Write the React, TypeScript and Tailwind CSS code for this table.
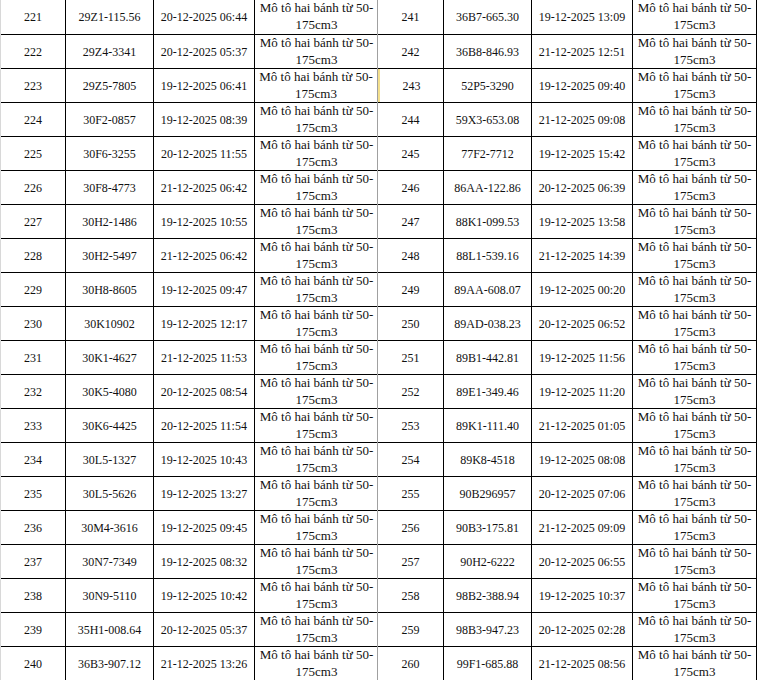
import React from "react";

const left: [string, string, string][] = [
  ["221", "29Z1-115.56", "20-12-2025 06:44"],
  ["222", "29Z4-3341", "20-12-2025 05:37"],
  ["223", "29Z5-7805", "19-12-2025 06:41"],
  ["224", "30F2-0857", "19-12-2025 08:39"],
  ["225", "30F6-3255", "20-12-2025 11:55"],
  ["226", "30F8-4773", "21-12-2025 06:42"],
  ["227", "30H2-1486", "19-12-2025 10:55"],
  ["228", "30H2-5497", "21-12-2025 06:42"],
  ["229", "30H8-8605", "19-12-2025 09:47"],
  ["230", "30K10902", "19-12-2025 12:17"],
  ["231", "30K1-4627", "21-12-2025 11:53"],
  ["232", "30K5-4080", "20-12-2025 08:54"],
  ["233", "30K6-4425", "20-12-2025 11:54"],
  ["234", "30L5-1327", "19-12-2025 10:43"],
  ["235", "30L5-5626", "19-12-2025 13:27"],
  ["236", "30M4-3616", "19-12-2025 09:45"],
  ["237", "30N7-7349", "19-12-2025 08:32"],
  ["238", "30N9-5110", "19-12-2025 10:42"],
  ["239", "35H1-008.64", "20-12-2025 05:37"],
  ["240", "36B3-907.12", "21-12-2025 13:26"],
];

const right: [string, string, string][] = [
  ["241", "36B7-665.30", "19-12-2025 13:09"],
  ["242", "36B8-846.93", "21-12-2025 12:51"],
  ["243", "52P5-3290", "19-12-2025 09:40"],
  ["244", "59X3-653.08", "21-12-2025 09:08"],
  ["245", "77F2-7712", "19-12-2025 15:42"],
  ["246", "86AA-122.86", "20-12-2025 06:39"],
  ["247", "88K1-099.53", "19-12-2025 13:58"],
  ["248", "88L1-539.16", "21-12-2025 14:39"],
  ["249", "89AA-608.07", "19-12-2025 00:20"],
  ["250", "89AD-038.23", "20-12-2025 06:52"],
  ["251", "89B1-442.81", "19-12-2025 11:56"],
  ["252", "89E1-349.46", "19-12-2025 11:20"],
  ["253", "89K1-111.40", "21-12-2025 01:05"],
  ["254", "89K8-4518", "19-12-2025 08:08"],
  ["255", "90B296957", "20-12-2025 07:06"],
  ["256", "90B3-175.81", "21-12-2025 09:09"],
  ["257", "90H2-6222", "20-12-2025 06:55"],
  ["258", "98B2-388.94", "19-12-2025 10:37"],
  ["259", "98B3-947.23", "20-12-2025 02:28"],
  ["260", "99F1-685.88", "21-12-2025 08:56"],
];

function Row({ r, i, side }: { r: [string, string, string]; i: number; side: "l" | "r" }) {
  const top = i > 0 ? "border-t border-black" : "";
  const cols =
    side === "l"
      ? "grid-cols-[65px_88px_101px_123px]"
      : "grid-cols-[66px_88px_101px_124px]";
  const yellowLeft = side === "r" && i === 2;
  const yellowRight = side === "l" && i === 2;
  return (
    <div className={`grid ${cols} h-[34px] ${top}`}>
      <div
        className={`flex items-center justify-center border-r border-black ${
          yellowLeft ? "border-l-2 border-l-[#f3df8c]" : ""
        }`}
      >
        {r[0]}
      </div>
      <div className="flex items-center justify-center border-r border-black whitespace-nowrap">
        {r[1]}
      </div>
      <div className="flex items-center justify-center border-r border-black whitespace-nowrap">
        {r[2]}
      </div>
      <div
        className={`flex flex-col items-center text-[13px] leading-[16.5px] whitespace-nowrap ${
          side === "r" ? "border-r border-black" : ""
        } ${yellowRight ? "border-r border-r-[#f3df8c]" : ""}`}
      >
        <span>Mô tô hai bánh từ 50-</span>
        <span>175cm3</span>
      </div>
    </div>
  );
}

export default function App() {
  return (
    <div
      className="w-[758px] h-[680px] overflow-hidden bg-white text-[#111] text-[12px] flex"
      style={{ fontFamily: '"Liberation Serif", "Times New Roman", serif' }}
    >
      <div className="w-[377px] flex flex-col border-l border-l-[#d8d8d8]">
        {left.map((r, i) => (
          <Row key={r[0]} r={r} i={i} side="l" />
        ))}
      </div>
      <div className="w-px bg-[#a0a0a0]" />
      <div className="w-[379px] flex flex-col">
        {right.map((r, i) => (
          <Row key={r[0]} r={r} i={i} side="r" />
        ))}
      </div>
    </div>
  );
}
